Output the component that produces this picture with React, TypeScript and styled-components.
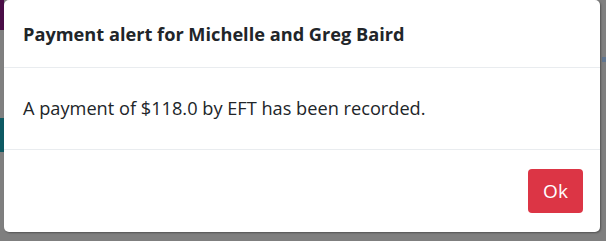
import React from "react";
import styled, { createGlobalStyle } from "styled-components";

const Global = createGlobalStyle`
  html, body { margin: 0; padding: 0; }
  body {
    width: 606px;
    height: 241px;
    overflow: hidden;
    background: #808080;
    font-family: "Open Sans", "Noto Sans", Arial, sans-serif;
    color: #212529;
  }
`;

const Page = styled.div`
  position: relative;
  width: 606px;
  height: 241px;
  background: #7f7f7f;
  overflow: hidden;
  display: flex;
  justify-content: space-between;
`;

const EdgeColumn = styled.div`
  display: flex;
  flex-direction: column;
  width: 4px;
`;

const Sliver = styled.div<{ $h: number; $bg: string }>`
  height: ${(p) => p.$h}px;
  background: ${(p) => p.$bg};
`;

const Modal = styled.div`
  position: absolute;
  left: 4px;
  top: 0;
  width: 596px;
  height: 232px;
  background: #fff;
  border-radius: 5px;
  box-shadow: 1px 1px 2px rgba(0, 0, 0, 0.35);
  display: flex;
  flex-direction: column;
`;

const Header = styled.div`
  height: 68px;
  box-sizing: border-box;
  border-bottom: 1px solid #e9ecef;
  padding: 0 19px;
  display: flex;
  align-items: center;
`;

const Title = styled.h5`
  margin: 0;
  font-size: 18.2px;
  font-weight: 700;
  color: #212529;
`;

const Body = styled.div`
  height: 82px;
  box-sizing: border-box;
  border-bottom: 1px solid #e9ecef;
  padding: 0 19px 2px;
  display: flex;
  align-items: center;
  font-size: 18.2px;
`;

const Footer = styled.div`
  flex: 1;
  display: flex;
  justify-content: flex-end;
  align-items: center;
  padding: 0 17px 0 0;
`;

const OkButton = styled.button`
  width: 55px;
  height: 44px;
  border: none;
  border-radius: 4px;
  background: #dc3545;
  color: #fff;
  font-family: inherit;
  font-size: 19px;
  cursor: pointer;
`;

export default function App() {
  return (
    <>
      <Global />
      <Page>
        <EdgeColumn>
          <Sliver $h={30} $bg="#4a0d47" />
          <Sliver $h={88} $bg="#808080" />
          <Sliver $h={34} $bg="#0d5a63" />
        </EdgeColumn>
        <EdgeColumn>
          <Sliver $h={57} $bg="#808080" />
          <Sliver $h={5} $bg="#5f7590" />
        </EdgeColumn>
        <Modal>
          <Header>
            <Title>Payment alert for Michelle and Greg Baird</Title>
          </Header>
          <Body>A payment of $118.0 by EFT has been recorded.</Body>
          <Footer>
            <OkButton>Ok</OkButton>
          </Footer>
        </Modal>
      </Page>
    </>
  );
}
